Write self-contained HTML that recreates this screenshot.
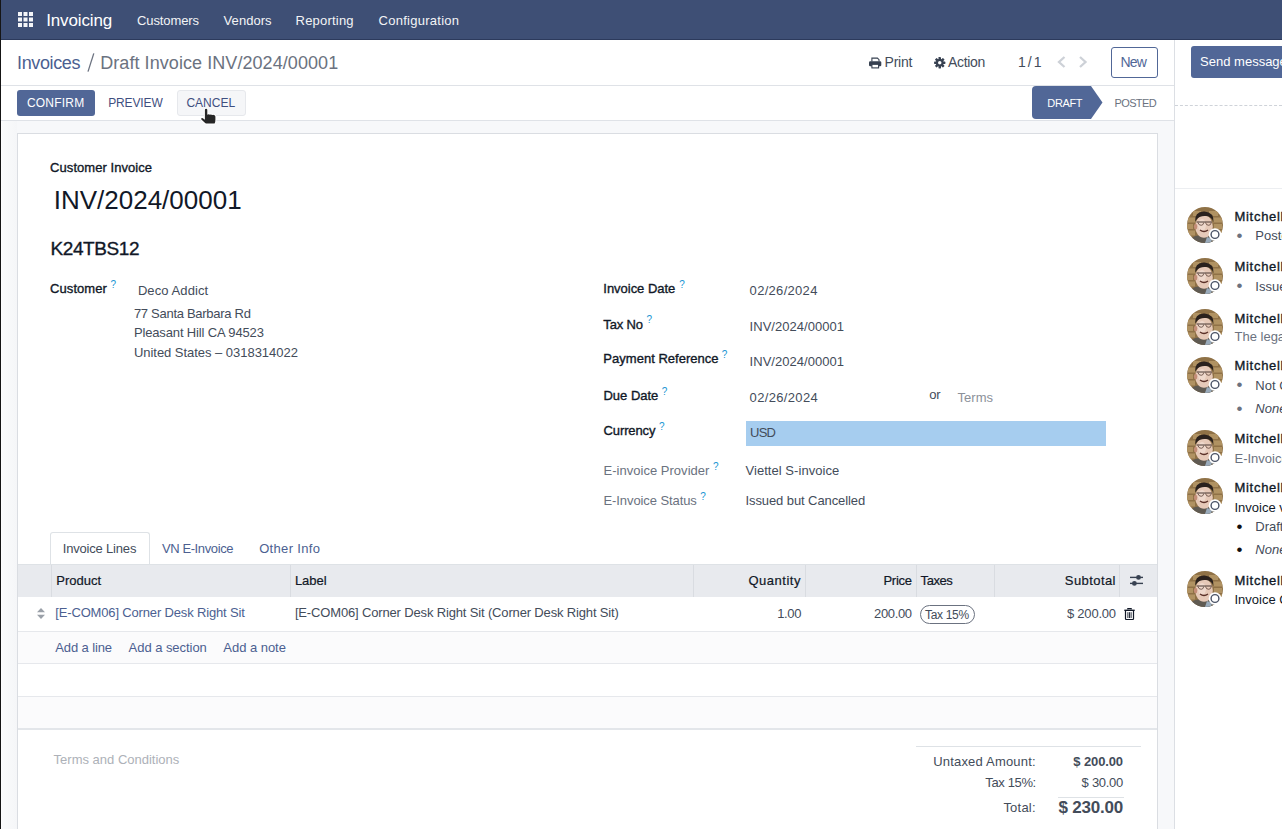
<!DOCTYPE html>
<html><head><meta charset="utf-8">
<style>
html,body{margin:0;padding:0;width:1282px;height:829px;overflow:hidden;background:#fff;font-family:"Liberation Sans",sans-serif;}
.t{position:absolute;white-space:pre;}
.b{position:absolute;box-sizing:border-box;}
svg{position:absolute;overflow:visible;}
</style></head><body>
<!-- navbar -->
<div class="b" style="left:0;top:0;width:1282px;height:39px;background:#3e4f75"></div>
<div class="b" style="left:0;top:39px;width:1282px;height:1px;background:#2c3a5c"></div>
<!-- app grid icon -->
<svg style="left:18px;top:12px" width="15" height="15" viewBox="0 0 15 15">
<g fill="#f4f5f8">
<rect x="0" y="0" width="4" height="4"/><rect x="5.5" y="0" width="4" height="4"/><rect x="11" y="0" width="4" height="4"/>
<rect x="0" y="5.5" width="4" height="4"/><rect x="5.5" y="5.5" width="4" height="4"/><rect x="11" y="5.5" width="4" height="4"/>
<rect x="0" y="11" width="4" height="4"/><rect x="5.5" y="11" width="4" height="4"/><rect x="11" y="11" width="4" height="4"/>
</g></svg>

<!-- control panel -->
<div class="b" style="left:0;top:85px;width:1174px;height:1px;background:#dfe2e7"></div>
<div class="b" style="left:0;top:120px;width:1174px;height:1px;background:#dfe2e7"></div>
<!-- form bg -->
<div class="b" style="left:0;top:121px;width:1174px;height:708px;background:#f7f8fa"></div>
<div class="b" style="left:2px;top:121px;width:15px;height:708px;background:linear-gradient(90deg,#fafbfc,#f5f6f8)"></div>
<div class="b" style="left:1px;top:121px;width:1px;height:708px;background:#fdfdfe"></div>
<!-- chatter divider -->
<div class="b" style="left:1174px;top:40px;width:1px;height:789px;background:#dcdfe4"></div>

<svg style="left:0;top:0" width="1" height="1"><line x1="88" y1="71.6" x2="93.8" y2="53.4" stroke="#6b7280" stroke-width="1.3"/></svg>
<!-- print icon -->
<svg style="left:869px;top:56.5px" width="13" height="12" viewBox="0 0 13 12">
<path d="M2.9 4.6V1.1H8.4L10 2.7V4.6" fill="none" stroke="#374151" stroke-width="1.1"/>
<rect x="0" y="4.3" width="12.3" height="5" rx="1.2" fill="#374151"/>
<rect x="2.9" y="7.3" width="6.7" height="3.6" fill="#fff" stroke="#374151" stroke-width="1.1"/>
</svg>
<!-- gear icon -->
<svg style="left:933.5px;top:56.8px" width="11.5" height="11.5" viewBox="-6 -6 12 12">
<g fill="#374151">
<circle r="4"/>
<rect x="-1.3" y="-5.9" width="2.6" height="11.8" rx=".5"/>
<rect x="-1.3" y="-5.9" width="2.6" height="11.8" rx=".5" transform="rotate(45)"/>
<rect x="-1.3" y="-5.9" width="2.6" height="11.8" rx=".5" transform="rotate(90)"/>
<rect x="-1.3" y="-5.9" width="2.6" height="11.8" rx=".5" transform="rotate(135)"/>
</g>
<circle r="1.8" fill="#fff"/>
</svg>
<!-- chevrons -->
<svg style="left:1056px;top:55px" width="12" height="14" viewBox="0 0 12 14"><path d="M8.5 2L3 7L8.5 12" fill="none" stroke="#cdd1d7" stroke-width="2.3"/></svg>
<svg style="left:1077px;top:55px" width="12" height="14" viewBox="0 0 12 14"><path d="M3 2L8.5 7L3 12" fill="none" stroke="#cdd1d7" stroke-width="2.3"/></svg>
<!-- New button -->
<div class="b" style="left:1111px;top:47px;width:47px;height:31px;border:1px solid #516797;border-radius:3px;background:#fff"></div>

<!-- CONFIRM -->
<div class="b" style="left:17px;top:90px;width:78px;height:26px;background:#516797;border-radius:3px"></div>
<!-- CANCEL hover -->
<div class="b" style="left:177px;top:90px;width:69px;height:26px;background:#f5f6f8;border:1px solid #e6e8ec;border-radius:3px"></div>
<!-- statusbar DRAFT -->
<svg style="left:1032px;top:86px" width="71" height="33" viewBox="0 0 71 33">
<path d="M4 0H59L70.5 16.5L59 33H4Q0 33 0 29V4Q0 0 4 0Z" fill="#516797"/>
</svg>

<!-- Send message -->
<div class="b" style="left:1191px;top:46px;width:120px;height:32px;background:#516797;border-radius:3px"></div>
<div class="b" style="left:1175px;top:105px;width:107px;height:0;border-top:1px dashed #cfd3d9"></div>
<div class="b" style="left:1175px;top:188px;width:107px;height:1px;background:#eceef1"></div>

<!-- sheet -->
<div class="b" style="left:17px;top:133px;width:1141px;height:700px;background:#fff;border:1px solid #dadde2"></div>

<!-- currency highlight -->
<div class="b" style="left:746px;top:421px;width:360px;height:25px;background:#a6cdef"></div>

<!-- tabs -->
<div class="b" style="left:50px;top:532px;width:100px;height:33px;background:#fff;border:1px solid #dee2e6;border-bottom:none;border-radius:3px 3px 0 0"></div>
<!-- table header -->
<div class="b" style="left:18px;top:564px;width:1139px;height:33px;background:#e8eaee;border-top:1px solid #dee2e6"></div>
<div class="b" style="left:51px;top:565px;width:1px;height:32px;background:#d9dce1"></div>
<div class="b" style="left:290px;top:565px;width:1px;height:32px;background:#d9dce1"></div>
<div class="b" style="left:693px;top:565px;width:1px;height:32px;background:#d9dce1"></div>
<div class="b" style="left:805px;top:565px;width:1px;height:32px;background:#d9dce1"></div>
<div class="b" style="left:916px;top:565px;width:1px;height:32px;background:#d9dce1"></div>
<div class="b" style="left:994px;top:565px;width:1px;height:32px;background:#d9dce1"></div>
<div class="b" style="left:1119px;top:565px;width:1px;height:32px;background:#d9dce1"></div>
<!-- rows -->
<div class="b" style="left:18px;top:631px;width:1139px;height:1px;background:#e6e8ec"></div>
<div class="b" style="left:18px;top:632px;width:1139px;height:31px;background:#fbfbfc"></div>
<div class="b" style="left:18px;top:663px;width:1139px;height:1px;background:#e6e8ec"></div>
<div class="b" style="left:18px;top:696px;width:1139px;height:1px;background:#e6e8ec"></div>
<div class="b" style="left:18px;top:697px;width:1139px;height:31px;background:#fbfbfc"></div>
<div class="b" style="left:18px;top:728px;width:1139px;height:2px;background:#e3e6ea"></div>

<!-- drag handle -->
<svg style="left:37px;top:608px" width="8" height="11" viewBox="0 0 8 11"><path d="M4 0L8 4.3H0Z M0 6.7H8L4 11Z" fill="#9aa0a8"/></svg>
<!-- tax badge -->
<div class="b" style="left:920px;top:605px;width:55px;height:19px;border:1px solid #6b7280;border-radius:10px"></div>
<!-- settings icon -->
<svg style="left:1129px;top:574px" width="15" height="13" viewBox="0 0 15 13">
<g stroke="#374151" stroke-width="1.4"><line x1="1" y1="3.4" x2="14" y2="3.4"/><line x1="1" y1="9.4" x2="14" y2="9.4"/></g>
<circle cx="9.5" cy="3.4" r="2.4" fill="#374151"/><circle cx="5.4" cy="9.4" r="2.4" fill="#374151"/>
</svg>
<!-- trash -->
<svg style="left:1123.5px;top:607.5px" width="11" height="12" viewBox="0 0 11 12">
<path d="M3.8 1.5V.6H7.2V1.5" fill="none" stroke="#111827" stroke-width="1.1"/>
<rect x=".3" y="1.6" width="10.4" height="1.4" fill="#111827"/>
<path d="M1.5 3V10.8Q1.5 11.5 2.2 11.5H8.8Q9.5 11.5 9.5 10.8V3" fill="none" stroke="#111827" stroke-width="1.2"/>
<g stroke="#111827" stroke-width=".9"><line x1="3.9" y1="4.2" x2="3.9" y2="10"/><line x1="5.5" y1="4.2" x2="5.5" y2="10"/><line x1="7.1" y1="4.2" x2="7.1" y2="10"/></g>
</svg>

<!-- totals lines -->
<div class="b" style="left:916px;top:746px;width:225px;height:1px;background:#dee2e6"></div>
<div class="b" style="left:1058px;top:797px;width:66px;height:1px;background:#dee2e6"></div>

<!-- avatars -->
<svg width="0" height="0" style="position:absolute">
<defs>
<clipPath id="cc"><circle cx="18" cy="18" r="18"/></clipPath>
<g id="av">
<g clip-path="url(#cc)">
<rect width="36" height="36" fill="#8f7146"/>
<g fill="#b09262">
<rect x="1" y="10.5" width="8" height="5"/><rect x="26" y="10.5" width="9" height="5"/>
<rect x="0" y="17" width="6" height="5"/><rect x="27" y="17" width="8" height="5"/>
<rect x="1" y="23.5" width="7" height="5"/><rect x="26" y="23.5" width="9" height="5"/>
<rect x="6" y="4" width="8" height="5"/><rect x="22" y="4" width="9" height="5"/>
</g>
<path d="M1 36Q4 29 11 28.5L24 29Q28 31 28 36Z" fill="#5f5a52"/>
<path d="M20 30L25 32L24 36H18Z" fill="#9aabbb"/>
<ellipse cx="17" cy="19.5" rx="8.8" ry="11.2" fill="#e6c9b8"/>
<ellipse cx="15" cy="18" rx="4" ry="6" fill="#f2e0d6" opacity=".7"/>
<ellipse cx="8.6" cy="19.5" rx="1.7" ry="2.8" fill="#c48e78"/>
<path d="M8 15Q7.5 4 17.5 4.5Q27 5 26.5 15.5Q25 9.5 19 9Q13 8.5 10.5 11.5Q8.8 13.2 8 15Z" fill="#2a211d"/>
<path d="M9.5 15H25" stroke="#4a3b35" stroke-width="1.1"/>
<path d="M11 15.5Q11.5 18.3 14.2 18.3Q16.3 18.3 16.8 15.5M18.5 15.5Q19 18.3 21.7 18.3Q23.8 18.3 24.3 15.5" fill="none" stroke="#6b5248" stroke-width=".9"/>
<path d="M13 23Q17 26 21 23" fill="none" stroke="#5a3028" stroke-width="1.3"/>
</g>
<circle cx="28" cy="27.5" r="6.3" fill="#fff"/>
<circle cx="28" cy="27.5" r="3.9" fill="none" stroke="#4b5366" stroke-width="1.4"/>
</g>
</defs></svg>
<svg style="left:1187px;top:207px" width="36" height="36"><use href="#av"/></svg>
<svg style="left:1187px;top:258px" width="36" height="36"><use href="#av"/></svg>
<svg style="left:1187px;top:309px" width="36" height="36"><use href="#av"/></svg>
<svg style="left:1187px;top:357px" width="36" height="36"><use href="#av"/></svg>
<svg style="left:1187px;top:430px" width="36" height="36"><use href="#av"/></svg>
<svg style="left:1187px;top:478px" width="36" height="36"><use href="#av"/></svg>
<svg style="left:1187px;top:571px" width="36" height="36"><use href="#av"/></svg>

<div class="t" style="top:12.2px;font-size:17px;line-height:17px;color:#ffffff;letter-spacing:-0.139px;left:46.2px;">Invoicing</div>
<div class="t" style="top:14.2px;font-size:13px;line-height:13px;color:#f3f4f6;letter-spacing:-0.107px;left:137.0px;">Customers</div>
<div class="t" style="top:14.2px;font-size:13px;line-height:13px;color:#f3f4f6;letter-spacing:0.049px;left:223.6px;">Vendors</div>
<div class="t" style="top:14.2px;font-size:13px;line-height:13px;color:#f3f4f6;letter-spacing:0.203px;left:295.6px;">Reporting</div>
<div class="t" style="top:14.2px;font-size:13px;line-height:13px;color:#f3f4f6;letter-spacing:0.264px;left:378.6px;">Configuration</div>
<div class="t" style="top:53.9px;font-size:18px;line-height:18px;color:#4c5f91;letter-spacing:-0.364px;left:17.0px;">Invoices</div>
<div class="t" style="top:53.9px;font-size:18px;line-height:18px;color:#6b7280;letter-spacing:0.068px;left:100.2px;">Draft Invoice INV/2024/00001</div>
<div class="t" style="top:55.2px;font-size:14px;line-height:14px;color:#434c5a;letter-spacing:-0.274px;left:884.6px;">Print</div>
<div class="t" style="top:55.2px;font-size:14px;line-height:14px;color:#434c5a;letter-spacing:-0.284px;left:947.9px;">Action</div>
<div class="t" style="top:55.2px;font-size:14px;line-height:14px;color:#434c5a;letter-spacing:-0.938px;left:1018.0px;">1 / 1</div>
<div class="t" style="top:55.2px;font-size:14px;line-height:14px;color:#516797;letter-spacing:-0.858px;left:1120.6px;">New</div>
<div class="t" style="top:97.0px;font-size:12px;line-height:12px;color:#ffffff;letter-spacing:0.217px;left:26.9px;">CONFIRM</div>
<div class="t" style="top:97.0px;font-size:12px;line-height:12px;color:#3f4f7f;letter-spacing:-0.124px;left:108.2px;">PREVIEW</div>
<div class="t" style="top:97.0px;font-size:12px;line-height:12px;color:#3f4f7f;left:186.4px;">CANCEL</div>
<div class="t" style="top:97.8px;font-size:11px;line-height:11px;color:#ffffff;letter-spacing:-0.343px;left:1047.3px;">DRAFT</div>
<div class="t" style="top:97.8px;font-size:11px;line-height:11px;color:#6b7280;letter-spacing:-0.627px;left:1114.5px;">POSTED</div>
<div class="t" style="top:54.7px;font-size:13px;line-height:13px;color:#ffffff;left:1200.1px;">Send message</div>
<div class="t" style="top:160.8px;font-size:13px;line-height:13px;color:#111827;-webkit-text-stroke:0.35px #111827;letter-spacing:0.056px;left:50.1px;">Customer Invoice</div>
<div class="t" style="top:187.0px;font-size:26px;line-height:26px;color:#111827;left:53.7px;">INV/2024/00001</div>
<div class="t" style="top:238.8px;font-size:19px;line-height:19px;color:#111827;-webkit-text-stroke:0.35px #111827;letter-spacing:-0.415px;left:50.5px;">K24TBS12</div>
<div class="t" style="top:281.9px;font-size:13px;line-height:13px;color:#111827;-webkit-text-stroke:0.35px #111827;letter-spacing:0.063px;left:50.1px;">Customer</div>
<div class="t" style="top:284.1px;font-size:13px;line-height:13px;color:#434c5a;letter-spacing:0.092px;left:137.9px;">Deco Addict</div>
<div class="t" style="top:307.0px;font-size:13px;line-height:13px;color:#434c5a;letter-spacing:-0.286px;left:133.9px;">77 Santa Barbara Rd</div>
<div class="t" style="top:326.2px;font-size:13px;line-height:13px;color:#434c5a;letter-spacing:-0.142px;left:133.9px;">Pleasant Hill CA 94523</div>
<div class="t" style="top:345.9px;font-size:13px;line-height:13px;color:#434c5a;letter-spacing:-0.033px;left:133.9px;">United States – 0318314022</div>
<div class="t" style="top:281.9px;font-size:13px;line-height:13px;color:#111827;-webkit-text-stroke:0.35px #111827;letter-spacing:-0.024px;left:603.3px;">Invoice Date</div>
<div class="t" style="top:284.1px;font-size:13px;line-height:13px;color:#434c5a;letter-spacing:0.302px;left:749.6px;">02/26/2024</div>
<div class="t" style="top:317.5px;font-size:13px;line-height:13px;color:#111827;-webkit-text-stroke:0.35px #111827;letter-spacing:-0.134px;left:603.3px;">Tax No</div>
<div class="t" style="top:319.7px;font-size:13px;line-height:13px;color:#434c5a;letter-spacing:0.033px;left:749.6px;">INV/2024/00001</div>
<div class="t" style="top:352.4px;font-size:13px;line-height:13px;color:#111827;-webkit-text-stroke:0.35px #111827;letter-spacing:0.025px;left:603.3px;">Payment Reference</div>
<div class="t" style="top:354.6px;font-size:13px;line-height:13px;color:#434c5a;letter-spacing:0.033px;left:749.6px;">INV/2024/00001</div>
<div class="t" style="top:389.2px;font-size:13px;line-height:13px;color:#111827;-webkit-text-stroke:0.35px #111827;letter-spacing:-0.017px;left:603.5px;">Due Date</div>
<div class="t" style="top:391.2px;font-size:13px;line-height:13px;color:#434c5a;letter-spacing:0.336px;left:749.6px;">02/26/2024</div>
<div class="t" style="top:388.3px;font-size:13px;line-height:13px;color:#434c5a;letter-spacing:-0.262px;left:929.3px;">or</div>
<div class="t" style="top:391.2px;font-size:13px;line-height:13px;color:#8b9099;left:957.6px;">Terms</div>
<div class="t" style="top:423.6px;font-size:13px;line-height:13px;color:#111827;-webkit-text-stroke:0.35px #111827;letter-spacing:-0.107px;left:603.5px;">Currency</div>
<div class="t" style="top:425.7px;font-size:13px;line-height:13px;color:#434c5a;letter-spacing:-0.727px;left:750.0px;">USD</div>
<div class="t" style="top:464.2px;font-size:13px;line-height:13px;color:#6b7280;letter-spacing:0.024px;left:603.5px;">E-invoice Provider</div>
<div class="t" style="top:464.2px;font-size:13px;line-height:13px;color:#434c5a;letter-spacing:0.045px;left:745.5px;">Viettel S-invoice</div>
<div class="t" style="top:493.8px;font-size:13px;line-height:13px;color:#6b7280;letter-spacing:-0.090px;left:603.5px;">E-Invoice Status</div>
<div class="t" style="top:493.8px;font-size:13px;line-height:13px;color:#434c5a;letter-spacing:-0.091px;left:745.5px;">Issued but Cancelled</div>
<div class="t" style="top:280.3px;font-size:10px;line-height:10px;color:#2196d3;left:110.6px;">?</div>
<div class="t" style="top:280.1px;font-size:10px;line-height:10px;color:#2196d3;left:679.2px;">?</div>
<div class="t" style="top:315.3px;font-size:10px;line-height:10px;color:#2196d3;left:646.4px;">?</div>
<div class="t" style="top:350.1px;font-size:10px;line-height:10px;color:#2196d3;left:721.8px;">?</div>
<div class="t" style="top:387.1px;font-size:10px;line-height:10px;color:#2196d3;left:661.7px;">?</div>
<div class="t" style="top:421.5px;font-size:10px;line-height:10px;color:#2196d3;left:659.0px;">?</div>
<div class="t" style="top:462.4px;font-size:10px;line-height:10px;color:#2196d3;left:712.9px;">?</div>
<div class="t" style="top:492.4px;font-size:10px;line-height:10px;color:#2196d3;left:700.3px;">?</div>
<div class="t" style="top:541.5px;font-size:13px;line-height:13px;color:#434c5a;letter-spacing:-0.191px;left:62.8px;">Invoice Lines</div>
<div class="t" style="top:541.5px;font-size:13px;line-height:13px;color:#4c5f91;letter-spacing:-0.389px;left:161.9px;">VN E-Invoice</div>
<div class="t" style="top:541.5px;font-size:13px;line-height:13px;color:#4c5f91;letter-spacing:0.321px;left:259.2px;">Other Info</div>
<div class="t" style="top:574.2px;font-size:13px;line-height:13px;color:#111827;-webkit-text-stroke:0.2px #111827;left:56.3px;">Product</div>
<div class="t" style="top:574.2px;font-size:13px;line-height:13px;color:#111827;-webkit-text-stroke:0.2px #111827;left:294.9px;">Label</div>
<div class="t" style="top:574.2px;font-size:13px;line-height:13px;color:#111827;-webkit-text-stroke:0.2px #111827;letter-spacing:0.525px;left:748.4px;">Quantity</div>
<div class="t" style="top:574.2px;font-size:13px;line-height:13px;color:#111827;-webkit-text-stroke:0.2px #111827;letter-spacing:-0.306px;left:883.5px;">Price</div>
<div class="t" style="top:574.2px;font-size:13px;line-height:13px;color:#111827;-webkit-text-stroke:0.2px #111827;letter-spacing:-0.442px;left:920.6px;">Taxes</div>
<div class="t" style="top:574.2px;font-size:13px;line-height:13px;color:#111827;-webkit-text-stroke:0.2px #111827;letter-spacing:0.428px;left:1064.8px;">Subtotal</div>
<div class="t" style="top:606.3px;font-size:13px;line-height:13px;color:#4c5f91;letter-spacing:-0.161px;left:55.3px;">[E-COM06] Corner Desk Right Sit</div>
<div class="t" style="top:606.3px;font-size:13px;line-height:13px;color:#434c5a;letter-spacing:-0.154px;left:294.9px;">[E-COM06] Corner Desk Right Sit (Corner Desk Right Sit)</div>
<div class="t" style="top:607.0px;font-size:13px;line-height:13px;color:#434c5a;letter-spacing:-0.404px;left:777.3px;">1.00</div>
<div class="t" style="top:607.0px;font-size:13px;line-height:13px;color:#434c5a;letter-spacing:-0.373px;left:874.1px;">200.00</div>
<div class="t" style="top:608.6px;font-size:12px;line-height:12px;color:#434c5a;letter-spacing:-0.339px;left:925.1px;">Tax 15%</div>
<div class="t" style="top:607.0px;font-size:13px;line-height:13px;color:#434c5a;letter-spacing:-0.201px;left:1066.9px;">$ 200.00</div>
<div class="t" style="top:640.9px;font-size:13px;line-height:13px;color:#4c5f91;letter-spacing:-0.125px;left:55.3px;">Add a line</div>
<div class="t" style="top:640.9px;font-size:13px;line-height:13px;color:#4c5f91;letter-spacing:-0.048px;left:128.6px;">Add a section</div>
<div class="t" style="top:640.9px;font-size:13px;line-height:13px;color:#4c5f91;letter-spacing:-0.032px;left:223.3px;">Add a note</div>
<div class="t" style="top:753.1px;font-size:13px;line-height:13px;color:#adb1b8;left:53.6px;">Terms and Conditions</div>
<div class="t" style="top:754.8px;font-size:13px;line-height:13px;color:#434c5a;letter-spacing:0.190px;left:933.2px;">Untaxed Amount:</div>
<div class="t" style="top:754.8px;font-size:13px;line-height:13px;color:#434c5a;font-weight:700;letter-spacing:-0.116px;left:1073.3px;">$ 200.00</div>
<div class="t" style="top:775.8px;font-size:13px;line-height:13px;color:#434c5a;letter-spacing:-0.369px;left:985.3px;">Tax 15%:</div>
<div class="t" style="top:775.8px;font-size:13px;line-height:13px;color:#434c5a;letter-spacing:-0.279px;left:1081.6px;">$ 30.00</div>
<div class="t" style="top:800.7px;font-size:13px;line-height:13px;color:#434c5a;letter-spacing:0.224px;left:1003.4px;">Total:</div>
<div class="t" style="top:799.0px;font-size:17px;line-height:17px;color:#434c5a;font-weight:700;letter-spacing:-0.212px;left:1058.5px;">$ 230.00</div>
<div class="t" style="top:209.7px;font-size:13px;line-height:13px;color:#111827;-webkit-text-stroke:0.35px #111827;letter-spacing:0.703px;left:1234.5px;">Mitchell</div>
<div class="t" style="top:260.3px;font-size:13px;line-height:13px;color:#111827;-webkit-text-stroke:0.35px #111827;letter-spacing:0.703px;left:1234.5px;">Mitchell</div>
<div class="t" style="top:311.5px;font-size:13px;line-height:13px;color:#111827;-webkit-text-stroke:0.35px #111827;letter-spacing:0.703px;left:1234.5px;">Mitchell</div>
<div class="t" style="top:359.3px;font-size:13px;line-height:13px;color:#111827;-webkit-text-stroke:0.35px #111827;letter-spacing:0.703px;left:1234.5px;">Mitchell</div>
<div class="t" style="top:432.3px;font-size:13px;line-height:13px;color:#111827;-webkit-text-stroke:0.35px #111827;letter-spacing:0.703px;left:1234.5px;">Mitchell</div>
<div class="t" style="top:480.6px;font-size:13px;line-height:13px;color:#111827;-webkit-text-stroke:0.35px #111827;letter-spacing:0.703px;left:1234.5px;">Mitchell</div>
<div class="t" style="top:573.5px;font-size:13px;line-height:13px;color:#111827;-webkit-text-stroke:0.35px #111827;letter-spacing:0.703px;left:1234.5px;">Mitchell</div>
<div class="t" style="top:228.8px;font-size:13px;line-height:13px;color:#434c5a;left:1255.3px;">Posted</div>
<div class="t" style="top:279.6px;font-size:13px;line-height:13px;color:#434c5a;left:1255.3px;">Issued</div>
<div class="t" style="top:330.2px;font-size:13px;line-height:13px;color:#6b7280;left:1234.5px;">The legal number</div>
<div class="t" style="top:378.6px;font-size:13px;line-height:13px;color:#434c5a;left:1255.3px;">Not Created</div>
<div class="t" style="top:401.8px;font-size:13px;line-height:13px;color:#434c5a;font-style:italic;left:1255.3px;">None</div>
<div class="t" style="top:452.4px;font-size:13px;line-height:13px;color:#6b7280;left:1234.5px;">E-Invoice Status</div>
<div class="t" style="top:500.5px;font-size:13px;line-height:13px;color:#111827;left:1234.5px;">Invoice validated</div>
<div class="t" style="top:519.8px;font-size:13px;line-height:13px;color:#434c5a;left:1255.3px;">Draft</div>
<div class="t" style="top:543.0px;font-size:13px;line-height:13px;color:#434c5a;font-style:italic;left:1255.3px;">None</div>
<div class="t" style="top:593.2px;font-size:13px;line-height:13px;color:#111827;left:1234.5px;">Invoice Created</div>
<div class="t" style="top:226.6px;font-size:17px;line-height:17px;color:#6b7280;left:1236.4px;">•</div>
<div class="t" style="top:277.4px;font-size:17px;line-height:17px;color:#6b7280;left:1236.4px;">•</div>
<div class="t" style="top:376.4px;font-size:17px;line-height:17px;color:#6b7280;left:1236.4px;">•</div>
<div class="t" style="top:399.6px;font-size:17px;line-height:17px;color:#6b7280;left:1236.4px;">•</div>
<div class="t" style="top:517.6px;font-size:17px;line-height:17px;color:#111;left:1236.4px;">•</div>
<div class="t" style="top:540.8px;font-size:17px;line-height:17px;color:#111;left:1236.4px;">•</div>

<!-- left dark edge -->
<div class="b" style="left:0;top:0;width:1px;height:829px;background:#151515"></div>

<!-- cursor -->
<svg style="left:200px;top:107px" width="18" height="19" viewBox="0 0 18 19">
<path d="M4.9 2.7Q4.9 1.8 6.1 1.8Q7.3 1.8 7.3 2.7V7.8Q8.3 7.1 9.4 7.5L9.9 7.8Q11 7.2 12.2 7.9Q13.5 7.5 14.6 8.2Q15.4 8.8 15.4 9.8V13Q15.4 15.2 14.6 16.4H6.3Q5.4 16.4 4.6 15.5L1.4 12.4Q.8 11.7 1.5 11.2Q2.3 10.7 3.2 11.4L4.9 12.8Z" fill="#262626" stroke="#fff" stroke-width="2" stroke-linejoin="round" paint-order="stroke"/>
</svg>
</body></html>
